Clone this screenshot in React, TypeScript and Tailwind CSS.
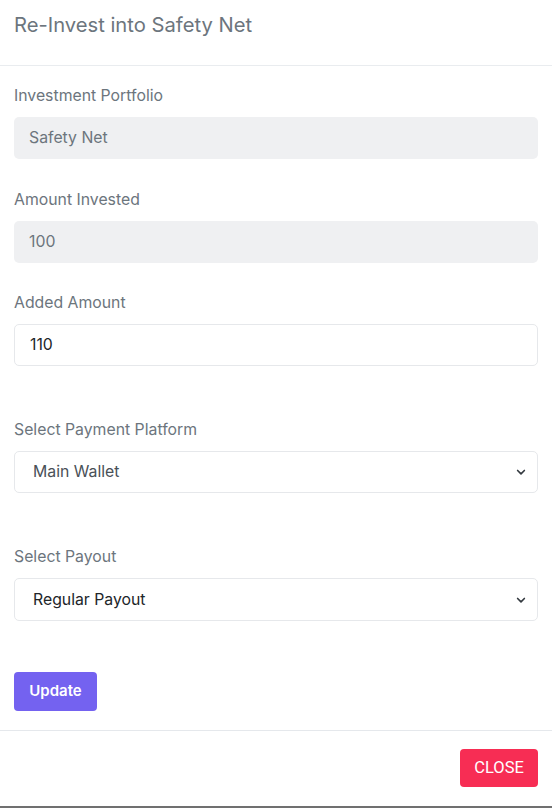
import React from "react";

function Chevron() {
  return (
    <svg width="12" height="12" viewBox="0 0 16 16" className="absolute right-[10px] top-1/2 -translate-y-1/2 pointer-events-none">
      <path d="M3.5 6l4.5 4.5L12.5 6" fill="none" stroke="#343a40" strokeWidth="2.2" strokeLinecap="round" strokeLinejoin="round" />
    </svg>
  );
}

export default function App() {
  const font = { fontFamily: "Inter, 'Noto Sans', sans-serif" };
  return (
    <div className="w-[552px] h-[808px] bg-white flex flex-col border-b-2 border-[#707070]" style={font}>
      <div className="h-[66px] border-b border-[#e9ecef] flex items-center px-[14px]">
        <h5 className="text-[20.2px] text-[#6c757d] leading-none -mt-[14px]">Re-Invest into Safety Net</h5>
      </div>
      <div className="px-[14px] pt-[19px] flex flex-col">
        <label className="text-[15.8px] leading-[22px] text-[#6c757d]">Investment Portfolio</label>
        <div className="mt-[10px] h-[42px] rounded-[5px] bg-[#eff0f2] flex items-center pl-[15px] text-[15.8px] text-[#6c757d]">Safety Net</div>

        <label className="mt-[30px] text-[15.8px] leading-[22px] text-[#6c757d]">Amount Invested</label>
        <div className="mt-[10px] h-[42px] rounded-[5px] bg-[#eff0f2] flex items-center pl-[15px] text-[15.8px] text-[#6c757d]">100</div>

        <label className="mt-[29px] text-[15.8px] leading-[22px] text-[#6c757d]">Added Amount</label>
        <div className="mt-[10px] h-[42px] rounded-[5px] bg-white border border-[#e6e8eb] flex items-center pl-[15px] text-[15.8px] text-[#212529]">110</div>

        <label className="mt-[53px] text-[15.8px] leading-[22px] text-[#6c757d]">Select Payment Platform</label>
        <div className="relative mt-[10px] h-[42px] rounded-[5px] bg-white border border-[#e6e8eb] flex items-center pl-[18px] text-[15.8px] text-[#495057]">
          Main Wallet
          <Chevron />
        </div>

        <label className="mt-[53px] text-[15.8px] leading-[22px] text-[#6c757d]">Select Payout</label>
        <div className="relative mt-[10px] h-[43px] rounded-[5px] bg-white border border-[#e6e8eb] flex items-center pl-[18px] text-[15.8px] text-[#212529]">
          Regular Payout
          <Chevron />
        </div>

        <div className="mt-[51px] flex">
          <button className="h-[39px] w-[83px] rounded-[4px] bg-[#7462f0] text-white text-[15px] font-semibold">Update</button>
        </div>
      </div>
      <div className="mt-[19px] border-t border-[#e5e8ec] flex justify-end px-[14px] pt-[18px]">
        <button className="h-[38px] w-[78px] rounded-[4px] bg-[#f72d54] text-white text-[16.5px] uppercase" style={{ fontFamily: "Roboto, sans-serif" }}>Close</button>
      </div>
    </div>
  );
}
